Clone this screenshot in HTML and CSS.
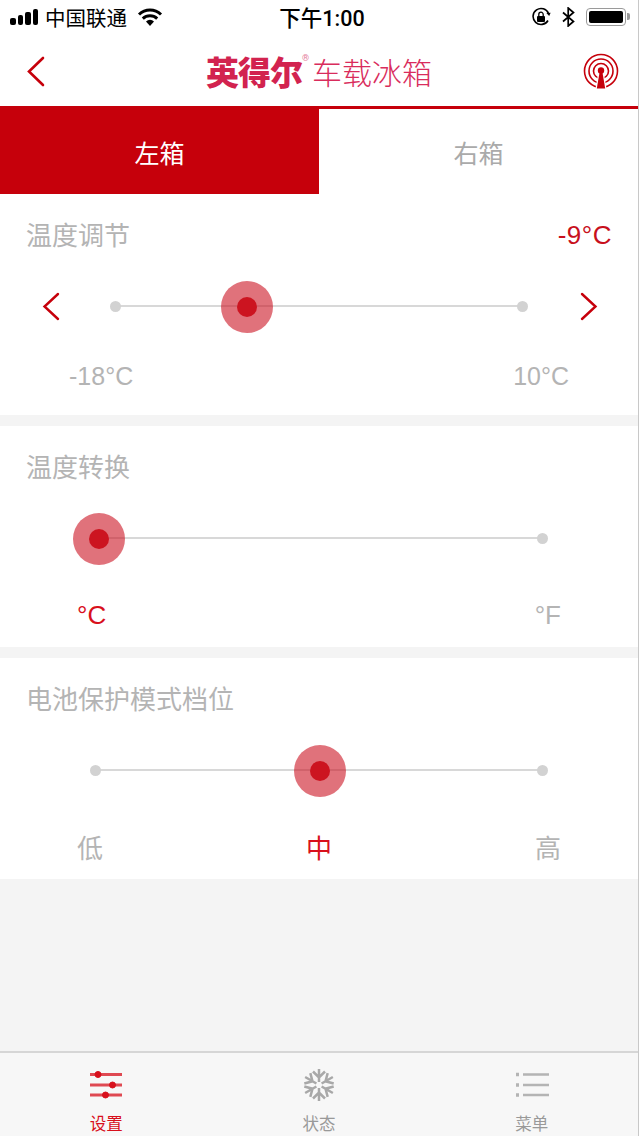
FILE: index.html
```html
<!DOCTYPE html>
<html lang="zh-CN">
<head>
<meta charset="UTF-8" />
<meta name="viewport" content="width=device-width, initial-scale=1" />
<title>英得尔车载冰箱</title>
<link rel="stylesheet" href="styles.css">
</head>
<body>
  <div class="app">
    <div class="status-bar">
      <div class="status-left">
        <span class="signal"><i></i><i></i><i></i><i></i></span>
        <span class="carrier">中国联通</span>
        <svg class="wifi" width="26" height="18" viewBox="0 0 26 18">
          <path d="M13 18l-4-4.6a6 6 0 0 1 8 0z" fill="#000"/>
          <path d="M2 6.500a16 16 0 0 1 22 0M5.800 10.600a10.600 10.600 0 0 1 14.400 0" fill="none" stroke="#000" stroke-width="3"/>
        </svg>
      </div>
      <div class="clock">下午1:00</div>
      <div class="status-right">
        <svg width="20" height="20" viewBox="0 0 20 20">
          <path d="M17 13.500A8 8 0 1 1 17.500 6.500" fill="none" stroke="#000" stroke-width="1.600"/>
          <path d="M19.600 5.800l-4.200.2 2.800 3z" fill="#000"/>
          <rect x="6" y="9" width="8" height="6" rx="1" fill="#000"/>
          <path d="M7.800 9V7.400a2.200 2.200 0 0 1 4.400 0V9" fill="none" stroke="#000" stroke-width="1.300"/>
        </svg>
        <svg width="13" height="20" viewBox="0 0 13 20">
          <path d="M1 5.500l10.500 9L6.200 19V1l5.300 4.500L1 14.500" fill="none" stroke="#000" stroke-width="1.700"/>
        </svg>
        <span class="battery"><i></i></span>
      </div>
    </div>

    <header class="nav">
      <svg class="nav-back" width="19" height="31" viewBox="0 0 19 31">
        <path d="M17 2L3 15.500 17 29" fill="none" stroke="#c6000b" stroke-width="2.600" stroke-linecap="round"/>
      </svg>
      <div class="brand"><b>英得尔</b><sup>®</sup><span>车载冰箱</span></div>
      <svg class="nav-signal" width="36" height="36" viewBox="0 0 36 36">
        <g fill="none" stroke="#c6000b" stroke-width="1.600">
          <circle cx="18" cy="18" r="16.500"/>
          <circle cx="18" cy="18" r="12"/>
          <circle cx="18" cy="18" r="7.500"/>
        </g>
        <path d="M16.800 18h2.400l3 17.500H13.800z" fill="#c6000b" stroke="#fff" stroke-width="2.500" paint-order="stroke"/>
        <circle cx="18" cy="17.500" r="3.200" fill="#c6000b"/>
      </svg>
    </header>

    <nav class="tabs">
      <div class="tab active">左箱</div>
      <div class="tab">右箱</div>
    </nav>

    <main class="panels">
      <section class="panel">
        <div class="panel-head">
          <span>温度调节</span>
          <span class="value">-9°C</span>
        </div>
        <div class="slider-row with-arrows">
          <svg class="arrow" width="18" height="29" viewBox="0 0 18 29">
            <path d="M16 2L2.500 14.500 16 27" fill="none" stroke="#c6000b" stroke-width="2.400" stroke-linecap="round"/>
          </svg>
          <div class="track">
            <span class="knob" style="left: 32.4%"></span>
          </div>
          <svg class="arrow" width="18" height="29" viewBox="0 0 18 29">
            <path d="M2 2l13.500 12.500L2 27" fill="none" stroke="#c6000b" stroke-width="2.400" stroke-linecap="round"/>
          </svg>
        </div>
        <div class="labels temp-range">
          <span>-18°C</span>
          <span>10°C</span>
        </div>
      </section>

      <section class="panel">
        <div class="panel-head">
          <span>温度转换</span>
        </div>
        <div class="slider-row unit-slider">
          <div class="track">
            <span class="knob" style="left: 0%"></span>
          </div>
        </div>
        <div class="labels unit-labels">
          <span class="on">°C</span>
          <span>°F</span>
        </div>
      </section>

      <section class="panel">
        <div class="panel-head">
          <span>电池保护模式档位</span>
        </div>
        <div class="slider-row level-slider">
          <div class="track">
            <span class="knob" style="left: 50.2%"></span>
          </div>
        </div>
        <div class="labels">
          <span>低</span>
          <span class="on">中</span>
          <span>高</span>
        </div>
      </section>
    </main>

    <footer class="tabbar">
      <div class="tabbar-item on">
        <svg width="34" height="34" viewBox="0 0 34 34">
          <g stroke="#d8101c" fill="#d8101c">
            <path d="M1 6.500h32M1 17h32M1 27h32" stroke-width="3" opacity=".75"/>
            <circle cx="9" cy="6.500" r="3"/>
            <circle cx="23.500" cy="17" r="3"/>
            <circle cx="16.500" cy="27" r="3"/>
          </g>
        </svg>
        <span>设置</span>
      </div>
      <div class="tabbar-item">
        <svg width="34" height="34" viewBox="0 0 34 34">
          <defs>
            <g id="flake-arm">
              <path d="M17 14V1M11 3.500l6 6 6-6"/>
            </g>
          </defs>
          <g stroke="#a8a8a8" stroke-width="2.500" fill="none">
            <use href="#flake-arm"/>
            <use href="#flake-arm" transform="rotate(60 17 17)"/>
            <use href="#flake-arm" transform="rotate(120 17 17)"/>
            <use href="#flake-arm" transform="rotate(180 17 17)"/>
            <use href="#flake-arm" transform="rotate(240 17 17)"/>
            <use href="#flake-arm" transform="rotate(300 17 17)"/>
          </g>
        </svg>
        <span>状态</span>
      </div>
      <div class="tabbar-item">
        <svg width="34" height="34" viewBox="0 0 34 34">
          <g stroke="#b4b4b4" stroke-width="2.400">
            <path d="M8 6.500h26M8 17h26M8 27h26"/>
            <path d="M1 6.500h4M1 17h4M1 27h4" stroke-width="3.500" stroke-dasharray="3 1"/>
          </g>
        </svg>
        <span>菜单</span>
      </div>
    </footer>
  </div>
</body>
</html>
```

FILE: styles.css
```css
* {
  box-sizing: border-box;
}
body {
  margin: 0;
  background: #f4f4f4;
  font-family: Roboto, "Noto Sans CJK SC", sans-serif;
  overflow: hidden;
}

.app {
  display: flex;
  flex-direction: column;
  height: 1136px;
  border-right: 1px solid #c8c8c8;
}

/* status bar */
.status-bar {
  display: flex;
  align-items: center;
  justify-content: space-between;
  position: relative;
  height: 36px;
  padding: 0 12px 2px 10px;
  background: #fff;
  color: #000;
}
.status-left {
  display: flex;
  align-items: center;
}
.signal {
  display: flex;
  align-items: flex-end;
  gap: 2px;
  height: 16px;
}
.signal i {
  width: 5.500px;
  background: #000;
  border-radius: 2px;
}
.signal i:nth-child(1) { height: 7px; }
.signal i:nth-child(2) { height: 10px; }
.signal i:nth-child(3) { height: 13px; }
.signal i:nth-child(4) { height: 16px; }
.carrier {
  margin-left: 7px;
  font-size: 20.500px;
}
.wifi {
  margin-left: 10px;
}
.clock {
  position: absolute;
  left: 6px;
  right: 0;
  margin-top: -2px;
  text-align: center;
  font-size: 21.500px;
  font-weight: 500;
}
.status-right {
  display: flex;
  align-items: center;
  gap: 11px;
}
.battery {
  position: relative;
  display: block;
  width: 40px;
  height: 18px;
  padding: 2px;
  border: 1.500px solid #9a9a9a;
  border-radius: 4px;
}
.battery i {
  display: block;
  height: 100%;
  background: #000;
  border-radius: 2px;
}
.battery::after {
  content: "";
  position: absolute;
  right: -5px;
  top: 4px;
  width: 3px;
  height: 7px;
  background: #9a9a9a;
  border-radius: 0 2px 2px 0;
}

/* nav */
.nav {
  display: flex;
  align-items: center;
  justify-content: space-between;
  height: 73px;
  padding: 0 19px 0 26px;
  background: #fff;
  border-bottom: 3px solid #c6000b;
}
.brand {
  display: flex;
  align-items: center;
  margin-left: 10px;
  color: #d2234f;
}
.brand b {
  font-size: 33px;
  font-weight: 900;
  letter-spacing: -1px;
}
.brand sup {
  align-self: flex-start;
  margin: 6px 0 0 0;
  font-size: 9px;
  opacity: .6;
}
.brand span {
  margin-left: 3px;
  font-size: 30px;
  font-weight: 300;
  color: #d92c5c;
}

/* left / right tabs */
.tabs {
  display: flex;
  height: 85px;
  background: #fff;
}
.tab {
  display: flex;
  flex: 1;
  align-items: center;
  justify-content: center;
  font-size: 25px;
  color: #aaa;
}
.tab.active {
  background: #c6000b;
  color: #fff;
}

/* setting panels */
.panels {
  display: flex;
  flex: 1;
  flex-direction: column;
  gap: 11px;
}
.panel {
  height: 221px;
  background: #fff;
}
.panel-head {
  display: flex;
  align-items: center;
  justify-content: space-between;
  height: 84px;
  padding: 0 26px 6px;
  font-size: 26px;
  color: #b4b4b4;
}
.panel-head .value {
  padding-top: 5px;
  font-family: "Liberation Sans", sans-serif;
  font-size: 26px;
  letter-spacing: .5px;
  color: #c8101c;
}

.slider-row {
  display: flex;
  align-items: center;
  height: 56px;
}
.slider-row.with-arrows {
  padding: 0 40px 0 42px;
}
.slider-row.unit-slider {
  padding: 0 95px 0 99px;
}
.slider-row.level-slider {
  padding: 0 95px 0 95px;
}
.arrow {
  flex: none;
}
.track {
  position: relative;
  flex: 1;
  height: 2px;
  background: #d8d8d8;
}
.with-arrows .track {
  margin: 0 57px 0 55px;
}
.track::before,
.track::after {
  content: "";
  position: absolute;
  top: -4.500px;
  width: 11px;
  height: 11px;
  border-radius: 50%;
  background: #d2d2d2;
}
.track::before { left: -5px; }
.track::after { right: -5px; }
.knob {
  position: absolute;
  top: 2px;
  z-index: 1;
  width: 52px;
  height: 52px;
  margin: -26px 0 0 -26px;
  border-radius: 50%;
  background: rgba(204, 20, 35, .6);
}
.knob::after {
  content: "";
  position: absolute;
  top: 16px;
  left: 16px;
  width: 20px;
  height: 20px;
  border-radius: 50%;
  background: #cc1420;
}

.labels {
  display: flex;
  justify-content: space-between;
  padding: 36px 77px 0;
  font-family: "Liberation Sans", "Noto Sans CJK SC", sans-serif;
  font-size: 26px;
  line-height: 30px;
  color: #b4b4b4;
}
.labels.unit-labels {
  padding-top: 34px;
}
.labels.temp-range {
  padding: 27px 69px 0;
  font-size: 25px;
}
.labels .on {
  color: #d8101c;
}

/* bottom bar */
.tabbar {
  display: grid;
  grid-template-columns: repeat(3, 1fr);
  height: 85px;
  background: #f7f7f7;
  border-top: 2px solid #d6d6d6;
}
.tabbar-item {
  display: flex;
  flex-direction: column;
  align-items: center;
  justify-content: space-between;
  padding: 15px 0 0;
  font-size: 16.500px;
  line-height: 22px;
  color: #999;
}
.tabbar-item.on {
  color: #d8101c;
}
```
